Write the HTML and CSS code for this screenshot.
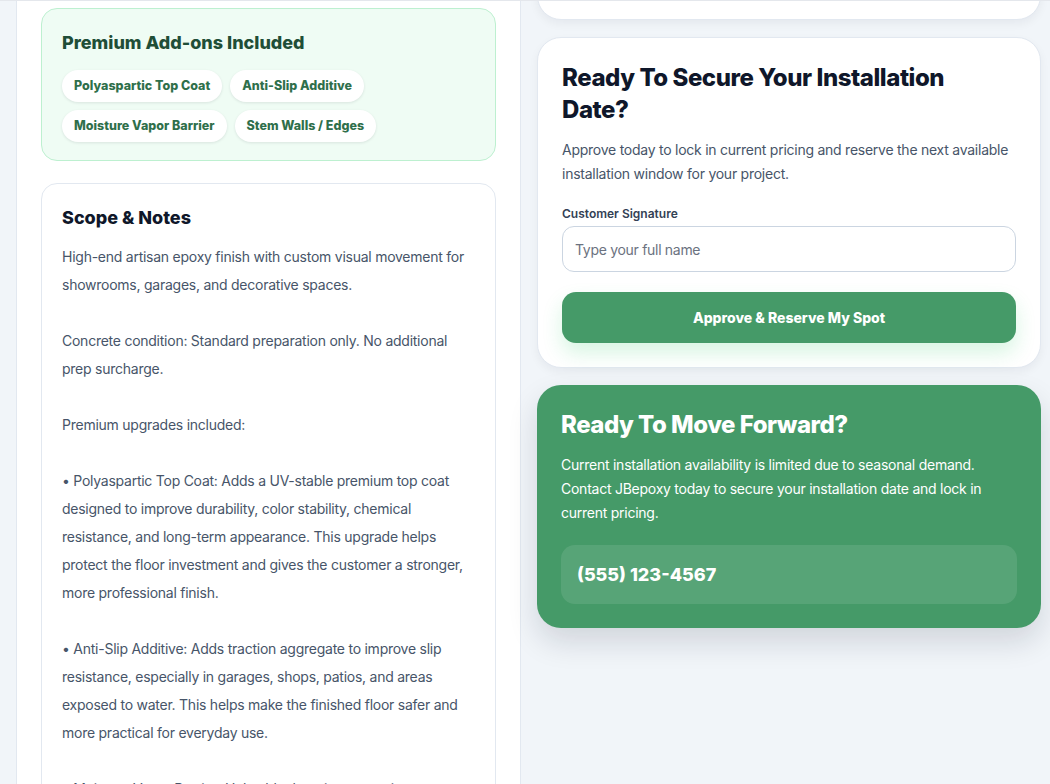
FILE: index.html
```html
<!DOCTYPE html>
<html lang="en">
<head>
  <meta charset="UTF-8" />
  <meta name="viewport" content="width=device-width, initial-scale=1.0"/>
  <title>JBepoxy Proposal</title>
  <link rel="stylesheet" href="styles.css">
</head>
<body>
  <div class="layout">
    <main class="proposal">
      <!-- Add-ons -->
      <section class="addons">
        <h3>Premium Add-ons Included</h3>
        <div class="chips">
          <span class="chip">Polyaspartic Top Coat</span>
          <span class="chip">Anti-Slip Additive</span>
          <span class="chip">Moisture Vapor Barrier</span>
          <span class="chip">Stem Walls / Edges</span>
        </div>
      </section>

      <!-- Notes -->
      <section class="notes">
        <h3>Scope &amp; Notes</h3>
        <p class="notes-text">High-end artisan epoxy finish with custom visual movement for showrooms, garages, and decorative spaces.

Concrete condition: Standard preparation only. No additional prep surcharge.

Premium upgrades included:

• Polyaspartic Top Coat: Adds a UV-stable premium top coat designed to improve durability, color stability, chemical resistance, and long-term appearance. This upgrade helps protect the floor investment and gives the customer a stronger, more professional finish.

• Anti-Slip Additive: Adds traction aggregate to improve slip resistance, especially in garages, shops, patios, and areas exposed to water. This helps make the finished floor safer and more practical for everyday use.

• Moisture Vapor Barrier: Helps block moisture coming up through the slab, which protects the coating from bubbling, peeling, and early failure.

• Stem Walls / Edges: Extends the coating up the stem walls and along the edges for a clean, finished look.</p>
      </section>
    </main>

    <aside class="sidebar">
      <div class="card summary"></div>

      <div class="card approve">
        <h2>Ready To Secure Your Installation Date?</h2>
        <p>Approve today to lock in current pricing and reserve the next available installation window for your project.</p>
        <label class="field-label" for="signature">Customer Signature</label>
        <input id="signature" class="field" type="text" placeholder="Type your full name">
        <button class="approve-button">Approve &amp; Reserve My Spot</button>
      </div>

      <div class="cta">
        <h2>Ready To Move Forward?</h2>
        <p>Current installation availability is limited due to seasonal demand. Contact JBepoxy today to secure your installation date and lock in current pricing.</p>
        <div class="phone">(555) 123-4567</div>
      </div>
    </aside>
  </div>
</body>
</html>
```

FILE: styles.css
```css
* { box-sizing: border-box; }
body {
  margin: 0;
  background-color: #f1f5f9;
  color: #475569;
  font-family: 'Inter', sans-serif;
  border-top: 1px solid #e4e7ec;
  overflow: hidden;
  height: 784px;
}
h2, h3, p { margin: 0; }

.layout {
  display: grid;
  grid-template-columns: 505px 504px;
  gap: 16px;
  align-items: start;
  padding-left: 16px;
}

/* left column */
.proposal {
  background-color: #ffffff;
  border-left: 1px solid #e2e8f0;
  border-right: 1px solid #e2e8f0;
  padding: 7px 24px 24px;
  display: flex;
  flex-direction: column;
  gap: 22px;
}
.addons {
  background-color: #effcf4;
  border: 1px solid #bdf0d0;
  border-radius: 16px;
  padding: 20px 20px 18px;
}
.addons h3 {
  font-size: 18px;
  line-height: 28px;
  font-weight: 800;
  color: #1f4e37;
}
.chips {
  display: flex;
  flex-wrap: wrap;
  gap: 8px;
  margin-top: 13px;
}
.chip {
  background-color: #ffffff;
  border-radius: 999px;
  padding: 8px 12px;
  font-size: 12.5px;
  line-height: 16px;
  font-weight: 800;
  color: #2f6f4b;
  box-shadow: 0 1px 3px rgba(15,23,42,0.1);
}
.notes {
  border: 1px solid #e2e8f0;
  border-radius: 16px;
  padding: 20px;
}
.notes h3 {
  font-size: 18px;
  line-height: 28px;
  font-weight: 800;
  color: #0f172a;
}
.notes-text {
  margin-top: 11px;
  font-size: 14px;
  line-height: 28px;
  letter-spacing: -0.25px;
  white-space: pre-line;
}

/* right column */
.sidebar {
  margin-top: -64px;
  display: flex;
  flex-direction: column;
  gap: 17px;
}
.card {
  background-color: #ffffff;
  border: 1px solid #e2e8f0;
  border-radius: 24px;
  box-shadow: 0 4px 10px rgba(15,23,42,0.05);
}
.summary { height: 83px; }
.approve { padding: 24px; }
.approve h2 {
  max-width: 420px;
  font-size: 24px;
  line-height: 32px;
  font-weight: 800;
  color: #0f172a;
  letter-spacing: -0.45px;
}
.approve p {
  margin-top: 12px;
  font-size: 14px;
  line-height: 24px;
  letter-spacing: -0.25px;
}
.field-label {
  display: block;
  margin-top: 20px;
  font-size: 12px;
  line-height: 16px;
  font-weight: 600;
  color: #334155;
}
.field {
  display: block;
  width: 100%;
  height: 46px;
  margin-top: 4px;
  padding: 0 12px;
  border: 1px solid #cbd5e1;
  border-radius: 12px;
  font-family: inherit;
  font-size: 14px;
  letter-spacing: -0.3px;
  color: #0f172a;
  background-color: #ffffff;
}
.field::placeholder { color: #6b7280; }
.approve-button {
  display: block;
  width: 100%;
  height: 51px;
  margin-top: 20px;
  border: none;
  border-radius: 14px;
  background-color: #459a68;
  color: #ffffff;
  font-family: inherit;
  font-size: 14px;
  font-weight: 800;
  cursor: pointer;
  box-shadow: 0 10px 20px rgba(34,197,94,0.18);
}
.cta {
  background-color: #459a68;
  color: #ffffff;
  border-radius: 24px;
  padding: 24px;
  box-shadow: 0 14px 30px rgba(15,23,42,0.14);
}
.cta h2 {
  font-size: 24px;
  line-height: 32px;
  font-weight: 800;
  letter-spacing: -0.5px;
}
.cta p {
  margin-top: 12px;
  font-size: 14px;
  line-height: 24px;
  letter-spacing: -0.25px;
}
.phone {
  margin-top: 20px;
  background-color: rgba(255,255,255,0.1);
  border-radius: 14px;
  padding: 18px 16px;
  font-size: 18px;
  line-height: 23px;
  font-weight: 800;
}
```
